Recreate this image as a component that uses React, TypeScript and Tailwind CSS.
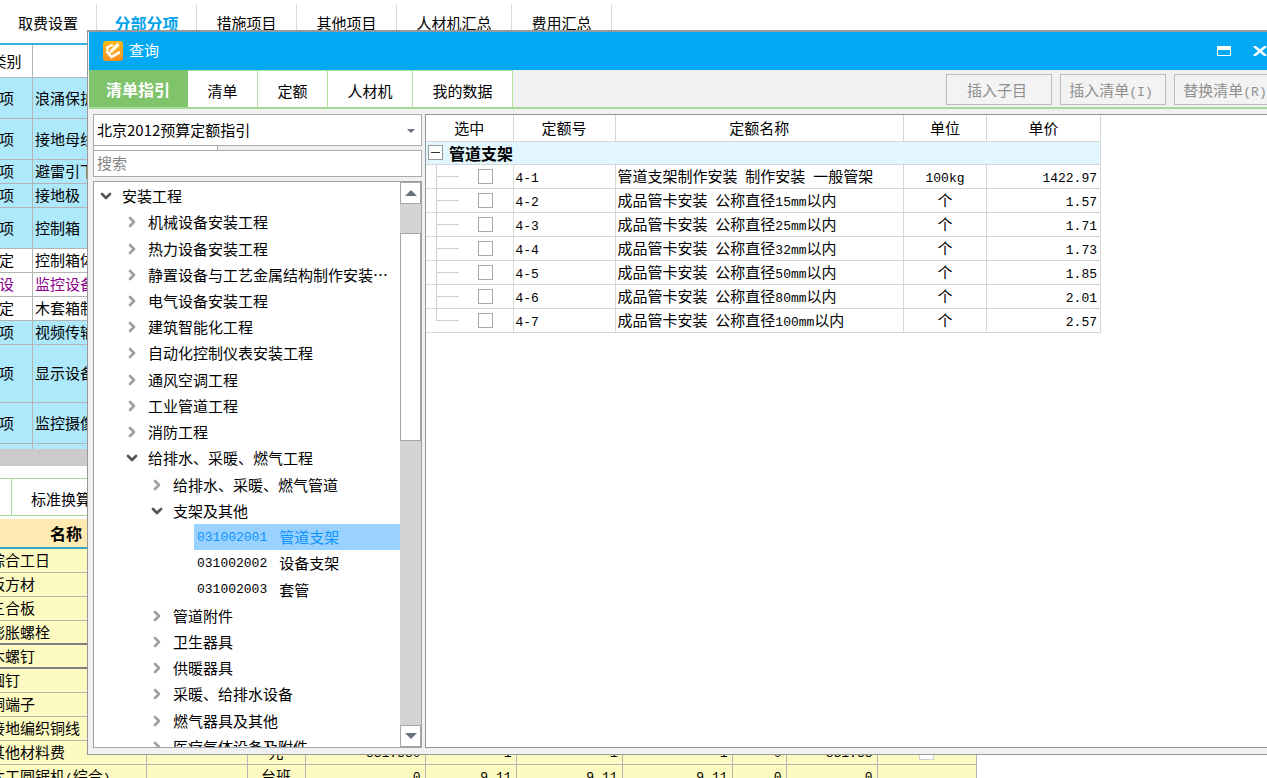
import { Fragment } from "react";

import { ChevronDown, ChevronRight } from "lucide-react";

import { clsx } from "clsx";

const mainTabs = [
  { label: "取费设置", width: "w-[97px]" },
  { label: "分部分项", width: "w-[100px]", active: true },
  { label: "措施项目", width: "w-[100px]" },
  { label: "其他项目", width: "w-[100px]" },
  { label: "人材机汇总", width: "w-[115px]" },
  { label: "费用汇总", width: "w-[100px]" },
];

const bills = [
  { type: "项", name: "浪涌保护器", height: "h-[41px]" },
  { type: "项", name: "接地母线", height: "h-[41px]" },
  { type: "项", name: "避雷引下线", height: "h-[24px]" },
  { type: "项", name: "接地极", height: "h-[24px]" },
  { type: "项", name: "控制箱", height: "h-[41px]" },
  { type: "定", name: "控制箱体", height: "h-[24px]", tone: "bg-white" },
  {
    type: "设",
    name: "监控设备",
    height: "h-[24px]",
    tone: "bg-white text-[#8b008b]",
  },
  { type: "定", name: "木套箱制作", height: "h-[24px]", tone: "bg-white" },
  { type: "项", name: "视频传输", height: "h-[24px]" },
  { type: "项", name: "显示设备", height: "h-[58px]" },
  { type: "项", name: "监控摄像机", height: "h-[41px]" },
];

const materials = [
  { name: "综合工日" },
  { name: "板方材" },
  { name: "三合板" },
  { name: "膨胀螺栓", current: true },
  { name: "木螺钉", current: true },
  { name: "圆钉" },
  { name: "铜端子" },
  { name: "接地编织铜线" },
  {
    name: "其他材料费",
    unit: "元",
    values: ["331.330", "1", "1", "1", "0", "331.33"],
    check: true,
  },
  {
    name: "木工圆锯机(综合)",
    unit: "台班",
    values: ["0", "9.11", "9.11", "9.11", "0", "0"],
  },
];

const dialogTabs = [
  { label: "清单指引", width: "w-[99px]", active: true },
  { label: "清单", width: "w-[70px]" },
  { label: "定额", width: "w-[70px]" },
  { label: "人材机", width: "w-[85px]" },
  { label: "我的数据", width: "w-[100px]" },
];

interface TreeNode {
  label: string;
  level: 0 | 1 | 2 | 3;
  code?: string;
  open?: boolean;
  selected?: boolean;
}

const tree: TreeNode[] = [
  { label: "安装工程", level: 0, open: true },
  { label: "机械设备安装工程", level: 1 },
  { label: "热力设备安装工程", level: 1 },
  { label: "静置设备与工艺金属结构制作安装…", level: 1 },
  { label: "电气设备安装工程", level: 1 },
  { label: "建筑智能化工程", level: 1 },
  { label: "自动化控制仪表安装工程", level: 1 },
  { label: "通风空调工程", level: 1 },
  { label: "工业管道工程", level: 1 },
  { label: "消防工程", level: 1 },
  { label: "给排水、采暖、燃气工程", level: 1, open: true },
  { label: "给排水、采暖、燃气管道", level: 2 },
  { label: "支架及其他", level: 2, open: true },
  { label: "管道支架", level: 3, code: "031002001", selected: true },
  { label: "设备支架", level: 3, code: "031002002" },
  { label: "套管", level: 3, code: "031002003" },
  { label: "管道附件", level: 2 },
  { label: "卫生器具", level: 2 },
  { label: "供暖器具", level: 2 },
  { label: "采暖、给排水设备", level: 2 },
  { label: "燃气器具及其他", level: 2 },
  { label: "医疗气体设备及附件", level: 2 },
];

const indents = ["pl-1", "pl-[30px]", "pl-[55px]", "pl-[100px]"];

const quotas = [
  { no: "4-1", name: "管道支架制作安装 制作安装 一般管架", unit: "100kg", price: "1422.97" },
  { no: "4-2", name: "成品管卡安装 公称直径15mm以内", unit: "个", price: "1.57" },
  { no: "4-3", name: "成品管卡安装 公称直径25mm以内", unit: "个", price: "1.71" },
  { no: "4-4", name: "成品管卡安装 公称直径32mm以内", unit: "个", price: "1.73" },
  { no: "4-5", name: "成品管卡安装 公称直径50mm以内", unit: "个", price: "1.85" },
  { no: "4-6", name: "成品管卡安装 公称直径80mm以内", unit: "个", price: "2.01" },
  { no: "4-7", name: "成品管卡安装 公称直径100mm以内", unit: "个", price: "2.57" },
];

// Latin runs are half the width of a Chinese character
function Mixed({ text }: { text: string }) {
  return (
    <>
      {text.split(/([\x20-\x7e]+)/).map((part, index) =>
        index % 2 ? (
          <span
            key={index}
            className="font-['Liberation_Mono',monospace] text-[13px] leading-none whitespace-pre">
            {part}
          </span>
        ) : (
          <Fragment key={index}>{part}</Fragment>
        )
      )}
    </>
  );
}

function MainTabs() {
  return (
    <nav className="flex h-[45px] border-b-2 border-[#35b1dd] pt-1">
      {mainTabs.map(tab => (
        <button
          key={tab.label}
          type="button"
          className={clsx(
            "h-[37px] shrink-0 border-r border-[#d9d9d9]",
            tab.width,
            tab.active && "font-bold text-[#03a3ee] text-base"
          )}>
          {tab.label}
        </button>
      ))}
    </nav>
  );
}

function BillTable() {
  return (
    <div className="h-[404px] overflow-hidden bg-[#ade8fb]">
      <table className="-ml-[20px] w-[300px] table-fixed border-collapse">
        <thead>
          <tr className="h-[32px] bg-white">
            <th className="w-[52px] border border-[#b4b4b4] border-t-0 font-normal">
              类别
            </th>
            <th className="border border-[#b4b4b4] border-t-0"></th>
          </tr>
        </thead>
        <tbody>
          {bills.map(bill => (
            <tr key={bill.name} className={clsx(bill.height, bill.tone)}>
              <td className="border border-[#b4b4b4] text-center">
                {bill.type}
              </td>
              <td className="border border-[#b4b4b4] pl-0.5">{bill.name}</td>
            </tr>
          ))}
          <tr className="h-[24px]">
            <td className="border border-[#b4b4b4]"></td>
            <td className="border border-[#b4b4b4]"></td>
          </tr>
        </tbody>
      </table>
    </div>
  );
}

function MaterialTable() {
  return (
    <table className="-ml-[14px] w-[991px] table-fixed border-collapse bg-[#fcfac1]">
      <thead>
        <tr className="h-[29px] border-b-2 border-[#35a6c9] bg-[#ffebb2]">
          <th className="w-[160px] font-bold text-base">名称</th>
          <th className="w-[101px]"></th>
          <th className="w-[58px]"></th>
          <th className="w-[120px]"></th>
          <th className="w-[91px]"></th>
          <th className="w-[106px]"></th>
          <th className="w-[110px]"></th>
          <th className="w-[54px]"></th>
          <th className="w-[91px]"></th>
          <th></th>
        </tr>
      </thead>
      <tbody>
        {materials.map(row => (
          <tr
            key={row.name}
            className={clsx(
              "h-[24px] border-b [&>td]:border-r [&>td]:border-r-[#b4b4b4]",
              row.current ? "border-b-2 border-[#808080]" : "border-[#b4b4b4]"
            )}>
            <td className="pl-1">
              <Mixed text={row.name} />
            </td>
            <td></td>
            <td className="text-center">{row.unit}</td>
            {(row.values ?? ["", "", "", "", "", ""]).map((value, index) => (
              <td key={index} className="pb-0.5 pr-1 text-right">
                <Mixed text={value} />
              </td>
            ))}
            <td className="text-center">
              {row.check && (
                <input
                  type="checkbox"
                  aria-label={row.name}
                  className="mx-auto block size-[15px] appearance-none border border-[#cfcfcf] bg-white"
                />
              )}
            </td>
          </tr>
        ))}
      </tbody>
    </table>
  );
}

function AppLogo() {
  return (
    <svg viewBox="0 0 20 20" className="size-5">
      <defs>
        <linearGradient id="logo" x1="0" y1="0" x2="0" y2="1">
          <stop offset="0" stopColor="#fcb813" />
          <stop offset="1" stopColor="#f58f1f" />
        </linearGradient>
      </defs>
      <rect width="20" height="20" rx="3" fill="url(#logo)" />
      <g fill="none" stroke="#fff8ea">
        <path d="M10 3.500 4 6.500 5 9.500" strokeWidth="2.400" />
        <path d="M15.500 3 9 9.500" strokeWidth="3.600" />
        <path d="M3.500 10 8.500 16 17 11" strokeWidth="2.800" />
      </g>
      <path d="M6.500 12.500 7.500 8l3 3z" fill="#fff8ea" />
    </svg>
  );
}

function TitleBar() {
  return (
    <header className="flex h-[38px] items-center bg-[#03a9f2] pl-[14px] pr-[17px] text-white">
      <AppLogo />
      <h1 className="ml-1.5 flex-1 pb-0.5">查询</h1>
      <button type="button" aria-label="最大化">
        <svg viewBox="0 0 14 10" className="h-[10px] w-[14px]">
          <path d="M0 0h14v10H0zM1 4v5h12V4z" fill="#fff" fillRule="evenodd" />
        </svg>
      </button>
      <button type="button" aria-label="关闭" className="ml-[22px]">
        <svg viewBox="0 0 14 10" className="h-[10px] w-[14px]">
          <path d="M1 0l12 10M13 0L1 10" stroke="#fff" strokeWidth="2.500" />
        </svg>
      </button>
    </header>
  );
}

function Toolbar() {
  return (
    <div className="flex h-[39px] items-stretch justify-between border-b-2 border-[#a5d998] bg-[#f1f1f1]">
      <nav className="flex">
        {dialogTabs.map(tab => (
          <button
            key={tab.label}
            type="button"
            className={clsx(
              "border-r border-t",
              tab.width,
              tab.active
                ? "border-[#7fc36b] bg-[#7fc36b] font-bold text-base text-white"
                : "border-[#aee39f] bg-white pt-1"
            )}>
            {tab.label}
          </button>
        ))}
      </nav>
      <div className="flex gap-2 pb-0.5 pr-1 pt-1">
        {["插入子目", "插入清单(I)", "替换清单(R)"].map(label => (
          <button
            key={label}
            type="button"
            disabled
            className="w-[106px] whitespace-nowrap border border-[#bdbdbd] bg-[#f3f3f3] pr-1 text-[#8f8f8f]">
            <Mixed text={label} />
          </button>
        ))}
      </div>
    </div>
  );
}

function TreeItem({ node }: { node: TreeNode }) {
  if (node.code) {
    return (
      <li className={clsx("flex", indents[node.level])}>
        <button
          type="button"
          className={clsx(
            "flex flex-1 items-center gap-3 whitespace-nowrap pl-[3px]",
            node.selected && "bg-[#99d1ff] text-[#0f93ff]"
          )}>
          <Mixed text={node.code} />
          <span>{node.label}</span>
        </button>
      </li>
    );
  }

  return (
    <li className={clsx("flex", indents[node.level])}>
      <button
        type="button"
        className="flex items-center gap-2 whitespace-nowrap">
        {node.open ? (
          <ChevronDown className="size-4 text-[#555]" strokeWidth={4} />
        ) : (
          <ChevronRight className="size-4 text-[#a0a0a0]" strokeWidth={4} />
        )}
        {node.label}
      </button>
    </li>
  );
}

function ScrollBar() {
  return (
    <div className="flex w-[21px] flex-col bg-[#d3d3d3]">
      <button
        type="button"
        aria-label="向上"
        className="flex h-[22px] items-center justify-center border border-[#a5a5a5] bg-white">
        <svg viewBox="0 0 12 6" className="h-[6px] w-[12px]">
          <path d="M6 0l6 6H0z" fill="#6b7080" />
        </svg>
      </button>
      <div className="mt-[29px] h-[208px] border border-[#a5a5a5] bg-white"></div>
      <button
        type="button"
        aria-label="向下"
        className="mt-auto flex h-[22px] items-center justify-center border border-[#a5a5a5] bg-white">
        <svg viewBox="0 0 12 6" className="h-[6px] w-[12px]">
          <path d="M6 6L0 0h12z" fill="#6b7080" />
        </svg>
      </button>
    </div>
  );
}

function GuidePanel() {
  return (
    <div className="flex w-[329px] shrink-0 flex-col">
      <div className="relative">
        <select
          aria-label="定额指引"
          className="block h-[32px] w-full appearance-none border border-[#ababab] bg-white px-[3px]">
          <option>北京2012预算定额指引</option>
        </select>
        <svg
          viewBox="0 0 8 4"
          className="pointer-events-none absolute right-[7px] top-[15px] h-[4px] w-[8px]">
          <path d="M0 0h8L4 4z" fill="#6b7080" />
        </svg>
      </div>
      <div className="h-1 w-[125px] border-x border-[#ababab] bg-white"></div>
      <input
        type="search"
        aria-label="搜索"
        placeholder="搜索"
        className="h-[27px] border border-[#ababab] bg-white px-[3px] pb-0.5 placeholder:text-[#858585]"
      />
      <div className="mt-1 flex min-h-0 flex-1 border border-[#9aa3ac] bg-white">
        <div className="h-full min-w-0 flex-1 overflow-hidden pt-px">
          <ul className="grid h-[577px] auto-rows-fr">
            {tree.map(node => (
              <TreeItem key={node.code ?? node.label} node={node} />
            ))}
          </ul>
        </div>
        <ScrollBar />
      </div>
    </div>
  );
}

function QuotaTable() {
  return (
    <div className="ml-[3px] flex-1 border border-[#8f979f] bg-white">
      <table className="w-[675px] table-fixed border-collapse">
        <thead>
          <tr className="h-[26px] [&>th]:border-b [&>th]:border-r [&>th]:border-[#d6d6d6] [&>th]:font-normal">
            <th className="w-[87px]">选中</th>
            <th className="w-[102px]">定额号</th>
            <th>定额名称</th>
            <th className="w-[83px]">单位</th>
            <th className="w-[114px]">单价</th>
          </tr>
        </thead>
        <tbody>
          <tr className="h-[23px] bg-[#e1f6fe]">
            <td
              colSpan={5}
              className="border-b border-r border-[#d6d6d6] p-0 font-bold text-base leading-5">
              <div className="flex items-center pl-0.5">
                <button
                  type="button"
                  aria-label="折叠"
                  className="mr-1.5 flex size-[15px] items-center justify-center border border-[#999] bg-white">
                  <span className="h-px w-[9px] bg-[#333]"></span>
                </button>
                管道支架
              </div>
            </td>
          </tr>
          {quotas.map((quota, index) => (
            <tr
              key={quota.no}
              className="h-[24px] leading-5 [&>td]:border-b [&>td]:border-r [&>td]:border-[#d6d6d6] [&>td]:pb-0">
              <td className="pt-0">
                <div className="flex items-center">
                  <svg viewBox="0 0 34 23" className="h-[23px] w-[34px]">
                    <path
                      d={
                        index === quotas.length - 1
                          ? "M10.500 0v11.500H33"
                          : "M10.500 0v23M10.500 11.500H33"
                      }
                      fill="none"
                      stroke="#cfcfcf"
                    />
                  </svg>
                  <input
                    type="checkbox"
                    aria-label={quota.no}
                    className="ml-[18px] size-[15px] appearance-none border border-[#a8a8a8] bg-white"
                  />
                </div>
              </td>
              <td className="pl-0.5">
                <Mixed text={quota.no} />
              </td>
              <td className="whitespace-nowrap pl-0.5">
                <Mixed text={quota.name} />
              </td>
              <td className="text-center">
                <Mixed text={quota.unit} />
              </td>
              <td className="pr-[3px] text-right">
                <Mixed text={quota.price} />
              </td>
            </tr>
          ))}
        </tbody>
      </table>
    </div>
  );
}

function QueryDialog() {
  return (
    <section
      role="dialog"
      aria-label="查询"
      className="absolute -right-[18px] bottom-[23px] left-[87px] top-[30px] flex flex-col border border-t-2 border-[#999] bg-[#f1f1f1] pl-px">
      <TitleBar />
      <Toolbar />
      <div className="flex min-h-0 flex-1 px-1 pb-[6px] pt-[5px]">
        <GuidePanel />
        <QuotaTable />
      </div>
    </section>
  );
}

export default function App() {
  return (
    <div className="relative h-screen overflow-hidden bg-white font-['Noto_Sans_CJK_SC','Liberation_Sans',sans-serif] text-[15px] leading-5 text-black">
      <MainTabs />
      <BillTable />
      <div className="h-[17px] bg-[#cbcbcb]"></div>
      <nav className="mt-3 flex h-[38px] border-y border-[#a5dc95]">
        <div className="w-3 border-r border-[#a5dc95]"></div>
        <button type="button" className="w-[98px] pt-1">
          标准换算
        </button>
      </nav>
      <div className="mt-[3px]">
        <MaterialTable />
      </div>
      <QueryDialog />
    </div>
  );
}
